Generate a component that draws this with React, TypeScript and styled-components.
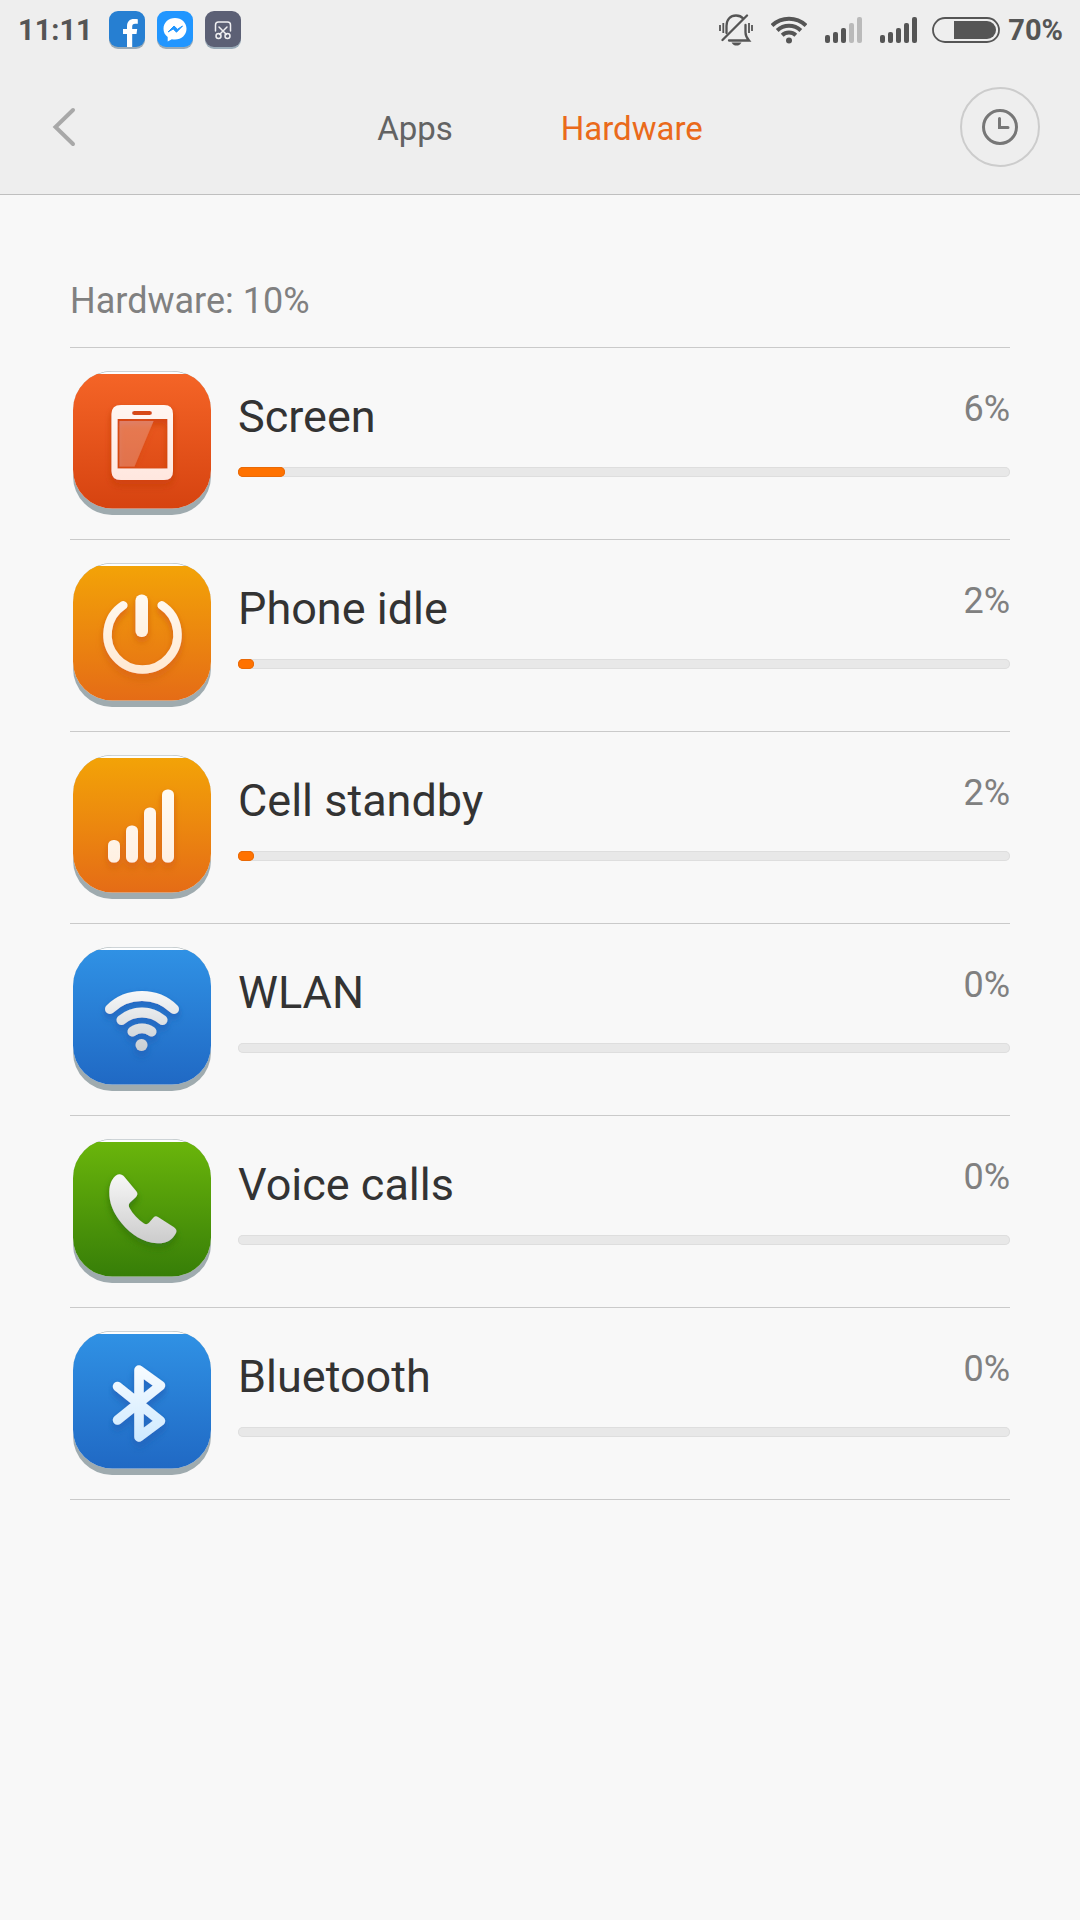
import React from "react";
import styled, { createGlobalStyle } from "styled-components";

const GlobalStyle = createGlobalStyle`
  * { box-sizing: border-box; }
  body {
    margin: 0;
    background: #f8f8f8;
    font-family: Roboto, "Noto Sans", sans-serif;
  }
  svg { display: block; flex: none; }
`;

const Page = styled.div`
  min-height: 100vh;
  background: #f8f8f8;
`;

const TopArea = styled.header`
  background: #eeeeee;
  border-bottom: 1px solid #bfbfbf;
`;

const StatusBar = styled.div`
  display: flex;
  align-items: center;
  justify-content: space-between;
  height: 60px;
  padding: 0 17px 0 18px;
  color: #555555;
`;

const StatusGroup = styled.div<{ $gap: number }>`
  display: flex;
  align-items: center;
  gap: ${(p) => p.$gap}px;
`;

const StatusText = styled.span`
  font-size: 29px;
  line-height: 36px;
  font-weight: 700;
`;

const Toolbar = styled.div`
  display: grid;
  grid-template-columns: 80px 1fr 80px;
  align-items: center;
  height: 134px;
  padding: 0 40px 0 24px;
`;

const BackButton = styled.button`
  display: flex;
  align-items: center;
  justify-content: center;
  width: 80px;
  height: 80px;
  padding: 0;
  border: 0;
  background: none;
`;

const HistoryButton = styled.button`
  display: flex;
  align-items: center;
  justify-content: center;
  width: 80px;
  height: 80px;
  padding: 0;
  border: 2px solid #cccccc;
  border-radius: 50%;
  background: none;
`;

const Tabs = styled.nav`
  display: flex;
  justify-content: center;
  gap: 108px;
  padding-left: 16px;
`;

const Tab = styled.button<{ $active?: boolean }>`
  padding: 3px 0 0;
  border: 0;
  background: none;
  font-family: inherit;
  font-size: 33px;
  line-height: 40px;
  color: ${(p) => (p.$active ? "#ea6a1b" : "#636363")};
`;

const Content = styled.main`
  padding: 82px 70px 0;
`;

const SectionTitle = styled.h1`
  margin: 0;
  padding-bottom: 22px;
  border-bottom: 1px solid #cacaca;
  font-size: 36px;
  line-height: 48px;
  font-weight: 400;
  color: #808080;
`;

const List = styled.ul`
  margin: 0;
  padding: 0;
  list-style: none;
`;

const Row = styled.li`
  display: flex;
  gap: 27px;
  height: 192px;
  padding: 23px 0 0 3px;
  border-bottom: 1px solid #cacaca;
`;

const RowBody = styled.div`
  flex: 1;
  padding-top: 18px;
`;

const RowHead = styled.div`
  display: flex;
  justify-content: space-between;
  height: 78px;
`;

const Name = styled.span`
  font-size: 45px;
  line-height: 56px;
  color: #333333;
`;

const Percent = styled.span`
  font-size: 36px;
  line-height: 40px;
  color: #808080;
`;

const Track = styled.div`
  height: 10px;
  border-radius: 5px;
  background: #e8e8e8;
  box-shadow: inset 0 0 0 1px #dedede;
`;

const Fill = styled.div`
  height: 10px;
  border-radius: 5px;
  background: #ff7200;
  box-shadow: inset 0 0 0 1px #e86a08;
`;

/* ---------- status bar icons ---------- */

function MiniTile({ color, children }: { color: string; children: React.ReactNode }) {
  return (
    <svg width="36" height="38" viewBox="0 0 36 38" aria-hidden="true">
      <rect y="4" width="36" height="34" rx="9" fill="#9aabb8" />
      <rect width="36" height="36" rx="9" fill={color} />
      {children}
    </svg>
  );
}

function FacebookIcon() {
  return (
    <MiniTile color="#267fd2">
      <path d="M18 36V23h-4v-5h4v-2.500c0-5 2.600-7.500 7-7.500 1.700 0 3 .1 3.800.3v4.500h-2.600c-2.200 0-3 1-3 3V18h5l-.7 5h-4.300v13z" fill="#fff" />
    </MiniTile>
  );
}

function MessengerIcon() {
  return (
    <MiniTile color="#2196ff">
      <path d="M18 7c-6.600 0-11.500 4.700-11.500 10.800 0 3.400 1.500 6.200 4.200 8.200V30.500l4.100-2.300c1 .3 2.100.4 3.200.4 6.600 0 11.500-4.700 11.500-10.800S24.600 7 18 7z" fill="#fff" />
      <path d="M11 21l6-6 3.500 3.300L25.500 15 19.500 21.200l-3.300-3.200z" fill="#2196ff" stroke="#2196ff" strokeLinejoin="round" />
    </MiniTile>
  );
}

function ScissorsIcon() {
  return (
    <MiniTile color="#5c6075">
      <g fill="none" stroke="#f0f0f2" strokeWidth="1.500" strokeLinecap="round">
        <path d="M10.500 20V14q0-3 3-3h9q3 0 3 3v6" />
        <path d="M14 16l7.500 7.500M22 16l-7.500 7.500" />
        <circle cx="13.500" cy="25" r="2.500" />
        <circle cx="22.500" cy="25" r="2.500" />
      </g>
    </MiniTile>
  );
}

function MutedBellIcon() {
  return (
    <svg width="34" height="32" viewBox="0 0 34 32" aria-label="Silent">
      <g fill="none" stroke="#555" strokeWidth="2.300" strokeLinecap="round">
        <path d="M7.500 19V12C7.500 5.500 11.500 1.500 17 1.500c3 0 5.500 1 7.200 3" />
        <path d="M26.500 11v7.500c0 3 1 5 3.500 8H10" />
        <path d="M3.500 26L28 1.500" />
      </g>
      <path d="M12.500 28.500h10C21 31 19.500 31.500 17.500 31.500s-3.500-.5-5-3z" fill="#555" />
      <path d="M1 11v6M4.300 9v10M30 9v10M33 11v6" stroke="#555" strokeWidth="1.800" fill="none" />
    </svg>
  );
}

function WifiStatusIcon() {
  return (
    <svg width="36" height="28" viewBox="0 0 36 28" aria-label="Wi-Fi">
      <g fill="none" stroke="#555" strokeWidth="4">
        <path d="M1 9.500a24.500 24.500 0 0 1 34 0" />
        <path d="M6.200 14.500a17 17 0 0 1 23.600 0" />
        <path d="M11.200 19.200a9.800 9.800 0 0 1 13.600 0" />
      </g>
      <circle cx="18" cy="24.500" r="3" fill="#555" />
    </svg>
  );
}

function SignalIcon({ level }: { level: number }) {
  return (
    <svg width="37" height="26" viewBox="0 0 37 26" aria-label={`Signal ${level} of 5`}>
      {[8, 11, 15, 20, 26].map((h, i) => (
        <rect key={h} x={i * 8} y={26 - h} width="5" height={h} rx="2" fill={i < level ? "#555" : "#bababa"} />
      ))}
    </svg>
  );
}

function BatteryIcon() {
  return (
    <svg width="68" height="26" viewBox="0 0 68 26" aria-hidden="true">
      <rect x="1" y="1" width="66" height="24" rx="12" fill="none" stroke="#555" strokeWidth="1.800" />
      <path d="M22 4h33a9 9 0 0 1 0 18H22z" fill="#555" />
    </svg>
  );
}

/* ---------- list icons ---------- */

const TILE_COLORS = {
  red: ["#f56527", "#d64310"],
  amber: ["#f3a407", "#e56c16"],
  blue: ["#3092e5", "#2069c4"],
  green: ["#6bb60b", "#377e08"],
};

type Tone = keyof typeof TILE_COLORS;

function Tile({ id, tone, glyph, children }: { id: string; tone: Tone; glyph: [string, string]; children: (paint: string) => React.ReactNode }) {
  const [top, bottom] = TILE_COLORS[tone];
  return (
    <svg width="138" height="144" viewBox="0 0 138 144" aria-hidden="true">
      <defs>
        <linearGradient id={`${id}-bg`} x1="0" y1="0" x2="0" y2="1">
          <stop offset="0" stopColor={top} />
          <stop offset="1" stopColor={bottom} />
        </linearGradient>
        <linearGradient id={`${id}-fg`} gradientUnits="userSpaceOnUse" x1="0" y1="34" x2="0" y2="108">
          <stop offset="0" stopColor={glyph[0]} />
          <stop offset="1" stopColor={glyph[1]} />
        </linearGradient>
        <clipPath id={`${id}-face`}>
          <rect y="3" width="138" height="141" />
        </clipPath>
        <filter id={`${id}-shadow`} x="-20%" y="-20%" width="140%" height="150%">
          <feDropShadow dx="0" dy="4" stdDeviation="3" floodColor={bottom} floodOpacity="0.9" />
          <feDropShadow dx="0" dy="2" stdDeviation="2" floodColor="#000" floodOpacity="0.18" />
        </filter>
      </defs>
      <rect width="138" height="144" rx="39" fill="#9fabaf" />
      <rect y="0.5" width="138" height="137" rx="39" fill="#fdfeff" />
      <rect width="138" height="137.500" rx="39" fill={`url(#${id}-bg)`} clipPath={`url(#${id}-face)`} />
      <g filter={`url(#${id}-shadow)`}>{children(`url(#${id}-fg)`)}</g>
    </svg>
  );
}

function ScreenIcon() {
  return (
    <Tile id="screen" tone="red" glyph={["#fff6f2", "#ffe7df"]}>
      {(paint) => (
        <>
          <path
            fillRule="evenodd"
            fill={paint}
            d="M48 34H91Q100 34 100 43V100Q100 109 91 109H48Q38.500 109 38.500 100V43Q38.500 34 48 34ZM44.500 48V97.500H94.500V48ZM61 40Q59 40 59 42T61 44H77Q79 44 79 42T77 40Z"
          />
          <path d="M46.500 50H80.500L61.500 95.500H46.500Z" fill="#fff" fillOpacity="0.16" />
        </>
      )}
    </Tile>
  );
}

function PowerIcon() {
  return (
    <Tile id="power" tone="amber" glyph={["#fff9f0", "#ffe9d3"]}>
      {(paint) => (
        <>
          <path d="M50.300 42.300A35 35 0 1 0 88.700 42.300" fill="none" stroke={paint} strokeWidth="8.500" strokeLinecap="round" />
          <rect x="62.500" y="31.500" width="12.500" height="42.500" rx="6" fill={paint} />
        </>
      )}
    </Tile>
  );
}

function CellIcon() {
  return (
    <Tile id="cell" tone="amber" glyph={["#fffaf3", "#fff0e2"]}>
      {(paint) =>
        [85, 70.5, 52.5, 34.5].map((y, i) => (
          <rect key={y} x={35 + i * 18} y={y} width="12" height={107.5 - y} rx="5.500" fill={paint} />
        ))
      }
    </Tile>
  );
}

function WlanIcon() {
  return (
    <Tile id="wlan" tone="blue" glyph={["#ffffff", "#c4cbd0"]}>
      {(paint) => (
        <>
          <g fill="none" stroke={paint} strokeWidth="10" strokeLinecap="round">
            <path d="M37 62A46 46 0 0 1 101 62" />
            <path d="M48.500 73A31.500 31.500 0 0 1 89.500 73" />
            <path d="M59.500 84.500A16.500 16.500 0 0 1 78.500 84.500" />
          </g>
          <circle cx="68.500" cy="98" r="6" fill={paint} />
        </>
      )}
    </Tile>
  );
}

function CallIcon() {
  return (
    <Tile id="call" tone="green" glyph={["#f8f8f8", "#c9c9c9"]}>
      {(paint) => (
        <path
          fill={paint}
          d="M43 36.500C46 34.500 49 35 51.500 38L63.500 52.500C65 54.500 64.500 56.500 62.500 58.500L57 63.500C55.500 65 55.500 67 56.500 69C60 75 65 80.500 71 84.500C73 85.800 74.500 85.300 76 83.800L80.500 78.500C82 77 83.500 77 85 78L101 88.200C103.500 90 104 92 103 94C99 101.500 93 104.500 84.500 104.300C70 103.500 58 95.500 48.500 84C40.500 74 36 64 36.300 52.500C36.500 45 39 39.500 43 36.500Z"
        />
      )}
    </Tile>
  );
}

function BluetoothIcon() {
  return (
    <Tile id="bluetooth" tone="blue" glyph={["#f8fcff", "#cfeaff"]}>
      {(paint) => (
        <path
          d="M44.500 55.500L87.500 90L66 106V39L87.500 54.500L44.500 89"
          fill="none"
          stroke={paint}
          strokeWidth="9.500"
          strokeLinecap="round"
          strokeLinejoin="round"
        />
      )}
    </Tile>
  );
}

const ITEMS = [
  { name: "Screen", share: 6.1, Icon: ScreenIcon },
  { name: "Phone idle", share: 2.1, Icon: PowerIcon },
  { name: "Cell standby", share: 2.1, Icon: CellIcon },
  { name: "WLAN", share: 0, Icon: WlanIcon },
  { name: "Voice calls", share: 0, Icon: CallIcon },
  { name: "Bluetooth", share: 0, Icon: BluetoothIcon },
];

export default function App() {
  return (
    <Page>
      <GlobalStyle />
      <TopArea>
        <StatusBar>
          <StatusGroup $gap={16}>
            <StatusText>11:11</StatusText>
            <StatusGroup $gap={12}>
              <FacebookIcon />
              <MessengerIcon />
              <ScissorsIcon />
            </StatusGroup>
          </StatusGroup>
          <StatusGroup $gap={15}>
            <StatusGroup $gap={18}>
              <MutedBellIcon />
              <WifiStatusIcon />
              <SignalIcon level={3} />
              <SignalIcon level={5} />
            </StatusGroup>
            <StatusGroup $gap={8}>
              <BatteryIcon />
              <StatusText>70%</StatusText>
            </StatusGroup>
          </StatusGroup>
        </StatusBar>
        <Toolbar>
          <BackButton aria-label="Back">
            <svg width="24" height="40" viewBox="0 0 24 40">
              <path d="M21 3L3.500 20L21 37" fill="none" stroke="#a8a8a8" strokeWidth="4" strokeLinecap="round" />
            </svg>
          </BackButton>
          <Tabs>
            <Tab>Apps</Tab>
            <Tab $active>Hardware</Tab>
          </Tabs>
          <HistoryButton aria-label="History">
            <svg width="36" height="36" viewBox="0 0 36 36">
              <circle cx="18" cy="18" r="16.500" fill="none" stroke="#777" strokeWidth="3" />
              <path d="M17.500 9.500V18.500H26" fill="none" stroke="#777" strokeWidth="3" strokeLinecap="round" />
            </svg>
          </HistoryButton>
        </Toolbar>
      </TopArea>
      <Content>
        <SectionTitle>Hardware: 10%</SectionTitle>
        <List>
          {ITEMS.map(({ name, share, Icon }) => (
            <Row key={name}>
              <Icon />
              <RowBody>
                <RowHead>
                  <Name>{name}</Name>
                  <Percent>{Math.round(share)}%</Percent>
                </RowHead>
                <Track role="progressbar" aria-label={name} aria-valuenow={share} aria-valuemin={0} aria-valuemax={100}>
                  <Fill style={{ width: `${share}%` }} />
                </Track>
              </RowBody>
            </Row>
          ))}
        </List>
      </Content>
    </Page>
  );
}
